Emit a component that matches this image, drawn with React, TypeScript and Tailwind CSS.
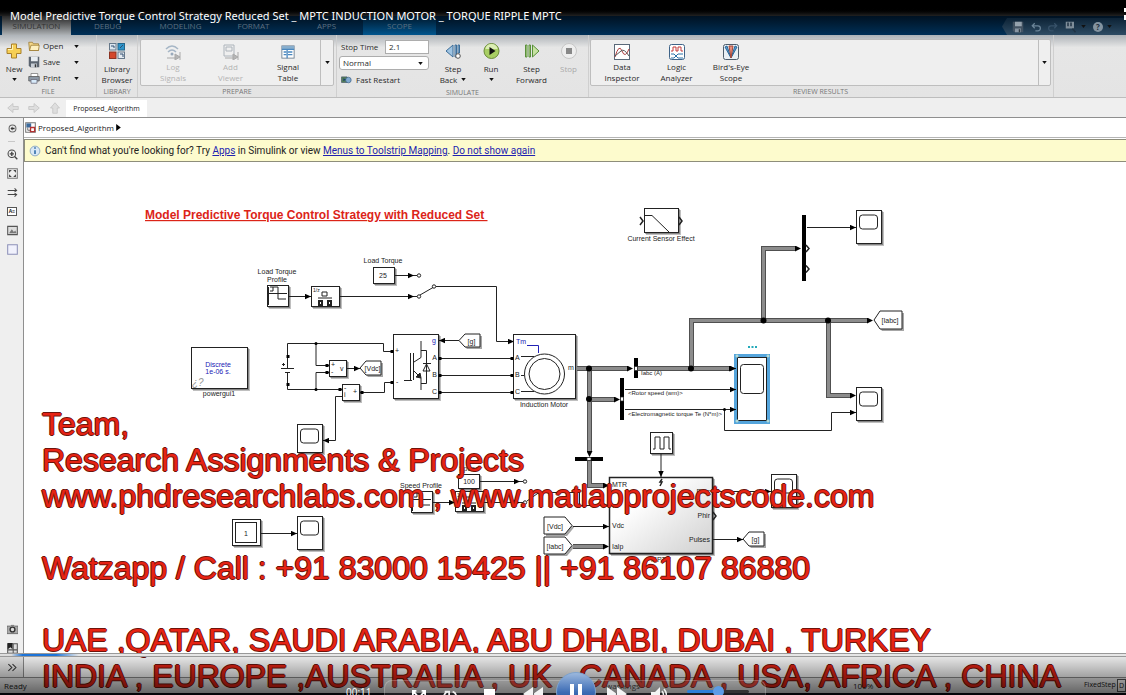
import type { ReactNode } from "react";

const Caret = ({ className = "" }: { className?: string }) => (
  <svg viewBox="0 0 6 4" className={`h-[3px] w-[5px] shrink-0 ${className}`}>
    <path d="M0 0h6L3 4z" fill="#111" />
  </svg>
);

const Icon = ({ children, className = "h-4 w-4" }: { children: ReactNode; className?: string }) => (
  <svg viewBox="0 0 16 16" fill="none" className={`shrink-0 ${className}`}>
    {children}
  </svg>
);

const FloppyIcon = () => (
  <Icon className="h-3 w-3">
    <path d="M1 1h14v14H3l-2-2z" fill="#5b6470" />
    <path d="M4 1h9v6H4z" fill="#e8edf2" />
    <path d="M4 10h8v5H4z" fill="#c8ced6" />
    <path d="M9 11h2v4H9z" fill="#333" />
  </Icon>
);

/* ---------- Toolstrip ---------- */

const ToolButton = ({
  icon,
  lines,
  caret,
  disabled,
  className = "w-10",
}: {
  icon: ReactNode;
  lines: string[];
  caret?: "inline" | "below";
  disabled?: boolean;
  className?: string;
}) => (
  <button
    disabled={disabled}
    className={`flex flex-col items-center whitespace-nowrap pt-2 leading-[11px] disabled:text-[#aaa] ${className}`}
  >
    {icon}
    <span className="mt-1">{lines[0]}</span>
    {lines[1] && (
      <span className="flex items-center gap-1">
        {lines[1]}
        {caret === "inline" && <Caret />}
      </span>
    )}
    {caret === "below" && <Caret className="mt-1" />}
  </button>
);

const GalleryButton = ({
  icon,
  lines,
  disabled,
  className = "w-[58px]",
}: {
  icon: ReactNode;
  lines: [string, string];
  disabled?: boolean;
  className?: string;
}) => (
  <button
    disabled={disabled}
    className={`flex flex-col items-center whitespace-nowrap pt-1 leading-[11px] disabled:text-[#b4b4b4] ${className}`}
  >
    {icon}
    <span className="mt-px">{lines[0]}</span>
    <span>{lines[1]}</span>
  </button>
);

const Group = ({
  label,
  children,
  className = "",
}: {
  label: string;
  children: ReactNode;
  className?: string;
}) => (
  <section className={`flex flex-col border-r border-[#cfcfcf] ${className}`}>
    <div className="flex h-[53px]">{children}</div>
    <h2 className="text-center text-[7px] leading-[10px] text-[#777]">{label}</h2>
  </section>
);

const FileButton = ({ icon, label }: { icon: ReactNode; label: string }) => (
  <button className="flex h-[16px] items-center gap-[3px]">
    {icon}
    <span className="w-[28px] text-left">{label}</span>
    <Caret />
  </button>
);

const Toolstrip = () => (
  <div className="flex h-[63px] border-b border-[#bdbdbd] bg-gradient-to-b from-[#aeb3b8] via-[#e6e6e6] via-20% to-[#e4e4e4] text-[8px] text-[#2a2a2a]">
    <Group label="FILE" className="w-[97px]">
      <ToolButton
        className="w-7"
        caret="below"
        lines={["New"]}
        icon={
          <Icon>
            <path d="M5.500 1h5v4.500h4.500v5h-4.500v4.500h-5v-4.500H1v-5h4.500z" fill="#f6cf55" stroke="#a9802b" />
            <path d="M6.500 2v4.500H2" stroke="#fff3b8" />
          </Icon>
        }
      />
      <div className="flex flex-col pt-[3px]">
        <FileButton
          label="Open"
          icon={
            <Icon className="h-3 w-3">
              <path d="M1 3h5l1 2h7v9H2z" fill="#f5d98a" stroke="#97762e" />
              <path d="M4 7h11l-1 7H2z" fill="#fdf0bf" stroke="#97762e" />
            </Icon>
          }
        />
        <FileButton label="Save" icon={<FloppyIcon />} />
        <FileButton
          label="Print"
          icon={
            <Icon className="h-3 w-3">
              <path d="M4 2h9v5H4z" fill="#fff" stroke="#777" />
              <path d="M1 6h14v6H1z" fill="#8d99a6" stroke="#555" />
              <path d="M4 10h8v5H4z" fill="#d8ebfa" stroke="#667" />
            </Icon>
          }
        />
      </div>
    </Group>

    <Group label="LIBRARY" className="w-[41px]">
      <ToolButton
        lines={["Library", "Browser"]}
        icon={
          <Icon>
            <rect x="0.500" y="0.500" width="6.500" height="6.500" fill="#dce6ef" stroke="#66788a" />
            <rect x="9" y="0.500" width="6.500" height="6.500" fill="#2d93c9" stroke="#24668c" />
            <rect x="0.500" y="9" width="6.500" height="6.500" fill="#d4472b" stroke="#8c3322" />
            <rect x="9" y="9" width="6.500" height="6.500" fill="#e5ebf1" stroke="#66788a" />
            <path d="M2 3h3v2M11 5l3-3M11 11h3v3" stroke="#304f70" />
          </Icon>
        }
      />
    </Group>

    <Group label="PREPARE" className="w-[199px] px-[2px]">
      <div className="mt-1 flex h-[47px] flex-1 rounded-[2px] border border-[#bebebe] bg-[#efefef]">
        <GalleryButton
          disabled
          className="w-[64px]"
          lines={["Log", "Signals"]}
          icon={
            <Icon>
              <path d="M1 5q6-6 12 0M3 8q4-4 8 0" stroke="#a6b6c6" strokeWidth="1.500" />
              <circle cx="7" cy="10" r="1.500" fill="#9aaabb" />
              <path d="M2 14h9M15 8v8M10 10l5 3-5 3z" stroke="#a9a9a9" fill="#b5b5b5" />
            </Icon>
          }
        />
        <GalleryButton
          disabled
          className="w-[51px]"
          lines={["Add", "Viewer"]}
          icon={
            <Icon>
              <path d="M1 1h10v11H1zM3 3h6v4H3z" stroke="#adb4bb" />
              <path d="M2 14h9M15 8v8M10 10l5 3-5 3z" stroke="#a9a9a9" fill="#b5b5b5" />
            </Icon>
          }
        />
        <GalleryButton
          className="w-[64px]"
          lines={["Signal", "Table"]}
          icon={
            <Icon className="h-4 w-[14px]">
              <rect x="1" y="1" width="14" height="14" fill="#fff" stroke="#6d7f90" />
              <path d="M1 1h14v4H1z" fill="#88aecd" />
              <path d="M3 8h3m2 0h5M3 11h3m2 0h5M7 5v10M1 5h14" stroke="#4a88c0" strokeWidth="1.500" />
            </Icon>
          }
        />
        <button aria-label="More prepare tools" className="flex flex-1 items-center justify-center border-l border-[#bebebe]">
          <Caret />
        </button>
      </div>
    </Group>

    <Group label="SIMULATE" className="w-[252px]">
      <div className="flex w-[98px] flex-col gap-[2px] pl-[2px] pt-1">
        <label className="flex h-[15px] items-center gap-[7px] pl-[2px]">
          <span className="w-[37px] whitespace-nowrap">Stop Time</span>
          <input defaultValue="2.1" className="h-[14px] w-[44px] border border-[#adadad] bg-white px-[3px]" />
        </label>
        <div className="relative flex items-center">
          <select
            aria-label="Simulation mode"
            className="h-[14px] w-[90px] appearance-none rounded-[3px] border border-[#adadad] bg-white px-[3px] leading-3"
          >
            <option>Normal</option>
          </select>
          <Caret className="pointer-events-none absolute right-3" />
        </div>
        <button className="flex h-[16px] items-center gap-1 pl-[2px]">
          <Icon className="h-[10px] w-[11px]">
            <path d="M0 3h9v9H0z" fill="#547f58" stroke="#405463" />
            <circle cx="11" cy="8" r="4.500" fill="#7fa9cf" stroke="#345a80" />
            <path d="M3 5v5l4-3z" fill="#183f69" />
          </Icon>
          Fast Restart
        </button>
      </div>
      <ToolButton
        className="w-[36px]"
        caret="inline"
        lines={["Step", "Back"]}
        icon={
          <Icon>
            <path d="M8 2v12L1 8zM10 2h1.500v12H10zM13 2h1.500v8H13z" fill="#9fc4e2" stroke="#3d6d98" />
            <circle cx="13" cy="13" r="2.300" fill="#fff" stroke="#555" />
          </Icon>
        }
      />
      <ToolButton
        className="w-[40px]"
        caret="below"
        lines={["Run"]}
        icon={
          <Icon className="h-4 w-[17px]">
            <circle cx="8" cy="8" r="7.500" fill="#a8ce63" stroke="#6a8a39" />
            <path d="M2 6a6 5 0 0 1 12 0z" fill="#dceeb4" />
            <path d="M6 4v8l6-4z" fill="#111" />
          </Icon>
        }
      />
      <ToolButton
        className="w-[41px]"
        lines={["Step", "Forward"]}
        icon={
          <Icon>
            <path d="M1.500 2H3v12H1.500zM5 2h1.500v12H5zM8.500 2v12L15 8z" fill="#c6e3a1" stroke="#598f3b" />
          </Icon>
        }
      />
      <ToolButton
        disabled
        className="w-[33px]"
        lines={["Stop"]}
        icon={
          <Icon>
            <circle cx="8" cy="8" r="7.500" fill="#eee" stroke="#c6c6c6" />
            <path d="M5 5h6v6H5z" fill="#888" />
          </Icon>
        }
      />
    </Group>

    <Group label="REVIEW RESULTS" className="min-w-[300px] flex-[0_1_465px] pl-px pr-[2px]">
      <div className="mt-1 flex h-[47px] flex-1 rounded-[2px] border border-[#bebebe] bg-[#efefef]">
        <GalleryButton
          className="w-[62px]"
          lines={["Data", "Inspector"]}
          icon={
            <Icon>
              <rect x="0.500" y="0.500" width="15" height="15" fill="#fff" stroke="#596878" />
              <path d="M1 13Q5-1 8 7t7-2" stroke="#b03d3d" />
              <path d="M1 12l6-5q3-3 8 5" stroke="#555" />
            </Icon>
          }
        />
        <GalleryButton
          className="w-[47px]"
          lines={["Logic", "Analyzer"]}
          icon={
            <Icon>
              <rect x="0.500" y="0.500" width="15" height="15" rx="2" fill="#fff" stroke="#3e6388" />
              <path d="M2 7h2V3h3v4h2V3h3v4h2" stroke="#c23a3a" />
              <path d="M2 10h3l4 4h5M2 14h3l4-4h5" stroke="#2b73a8" />
            </Icon>
          }
        />
        <GalleryButton
          className="w-[62px]"
          lines={["Bird's-Eye", "Scope"]}
          icon={
            <Icon>
              <rect x="0.500" y="0.500" width="15" height="15" rx="2" fill="#e9eff4" stroke="#4d5c6b" />
              <path d="M2 3l6 11L4 2z" fill="#5c9bcd" stroke="#2c689a" />
              <path d="M14 3L8 14l4-12z" fill="#5c9bcd" stroke="#2c689a" />
              <path d="M6 2h4L8 14z" fill="#e58e7e" stroke="#a84636" />
            </Icon>
          }
        />
        <button aria-label="More review tools" className="ml-auto flex w-3 items-center justify-center border-l border-[#bebebe]">
          <Caret />
        </button>
      </div>
    </Group>
  </div>
);

const TabBar = () => (
  <div className="flex h-[19px] bg-gradient-to-b from-[#001222] to-[#003058] pl-[2px] text-[8px] leading-[19px] text-[#5d7080]">
    <a href="#simulation" className="w-[69px] bg-gradient-to-b from-[#282828] to-[#aeb2b5] text-center text-[#333]">
      SIMULATION
    </a>
    <a href="#debug" className="w-[73px] text-center">DEBUG</a>
    <a href="#modeling" className="w-[73px] text-center">MODELING</a>
    <a href="#format" className="w-[73px] text-center">FORMAT</a>
    <a href="#apps" className="w-[73px] text-center">APPS</a>
    <a href="#scope" className="w-[73px] bg-gradient-to-b from-[#00182c] to-[#00558e] text-center">SCOPE</a>
    <div className="ml-auto flex h-[17px] w-[124px] items-center gap-[7px] self-end bg-gradient-to-b from-[#0d2336] to-[#2e4c64] pl-[10px] [clip-path:polygon(5px_0,100%_0,100%_100%,5px_100%,0_50%)]">
      <button aria-label="Save" className="opacity-60">
        <FloppyIcon />
      </button>
      <button aria-label="Undo">
        <Icon className="h-[10px] w-[10px]">
          <path d="M6 2L2 6l4 4M2 6h9q4 0 4 4t-4 4H7" stroke="#6b8498" strokeWidth="2" />
        </Icon>
      </button>
      <button aria-label="Redo">
        <Icon className="h-[10px] w-[10px]">
          <path d="M10 2l4 4-4 4M14 6H5q-4 0-4 4t4 4h4" stroke="#375269" strokeWidth="2" />
        </Icon>
      </button>
      <button aria-label="Find" className="flex items-center gap-1">
        <Icon className="h-3 w-3">
          <path d="M1 1h11v9H1z" fill="#7e8d99" />
          <path d="M4 2v5m4-5v5M10 10l4 5" stroke="#203344" strokeWidth="2" />
        </Icon>
        <Caret />
      </button>
      <button aria-label="Help" className="flex items-center gap-1">
        <span className="flex h-[10px] w-[10px] items-center justify-center rounded-full bg-[#8393a0] text-[8px] font-bold leading-none text-[#1d2e3e]">
          ?
        </span>
        <Caret />
      </button>
    </div>
  </div>
);

/* ---------- Side palette ---------- */

const PaletteButton = ({ label, children }: { label: string; children: ReactNode }) => (
  <button aria-label={label} className="flex h-[19px] w-6 items-center justify-center">
    <Icon className="h-[11px] w-[11px]">{children}</Icon>
  </button>
);

const Palette = () => (
  <nav className="flex w-6 shrink-0 flex-col border-r border-[#8f8f8f] bg-[#efefef] pt-[1px]">
    <PaletteButton label="Hide browser">
      <circle cx="8" cy="8" r="5" stroke="#666" strokeWidth="1.500" />
      <path d="M5 8l3-3v6zM8 7h3v2H8z" fill="#333" />
    </PaletteButton>
    <hr className="mx-2 my-[3px] border-[#c8c8c8]" />
    <PaletteButton label="Zoom">
      <circle cx="7" cy="7" r="5.500" stroke="#444" strokeWidth="1.500" />
      <path d="M4 7h6M7 4v6M11 11l4 4" stroke="#444" strokeWidth="2" />
    </PaletteButton>
    <PaletteButton label="Fit to view">
      <path d="M1 1h14v14H1z" stroke="#777" strokeWidth="1.500" />
      <path d="M3 3h4L3 7zM13 3v4L9 3zM13 13H9l4-4zM3 13V9l4 4z" fill="#444" />
    </PaletteButton>
    <PaletteButton label="Sample time">
      <path d="M1 5h13M1 11h13M11 2l3 3-3 2M11 9l3 2-3 3" stroke="#444" strokeWidth="1.500" />
    </PaletteButton>
    <button aria-label="Annotation" className="flex h-[19px] w-6 items-center justify-center">
      <span className="border border-[#555] bg-white px-[1px] text-[5px] font-bold leading-[7px]">A≡</span>
    </button>
    <PaletteButton label="Image">
      <path d="M1 2h14v12H1z" fill="#ddd" stroke="#555" strokeWidth="1.500" />
      <path d="M3 12l4-6 3 4 2-2 2 4z" fill="#777" />
    </PaletteButton>
    <PaletteButton label="Area">
      <path d="M1 1h14v14H1z" fill="#f0f1fc" stroke="#8c90b8" strokeWidth="1.500" />
    </PaletteButton>
    <div className="mt-auto flex flex-col">
      <PaletteButton label="Screenshot">
        <path d="M0 3h5l1-1h4l1 1h5v11H0z" fill="#aaa" stroke="#555" />
        <circle cx="8" cy="8" r="3.500" fill="#ddd" stroke="#333" strokeWidth="2" />
      </PaletteButton>
      <PaletteButton label="Viewmarks">
        <path d="M1 1h14v14H1zM1 10h14M9 1v14" fill="#ddd" stroke="#555" strokeWidth="1.500" />
        <path d="M1 0h7v9L5 6 1 9z" fill="#222" />
      </PaletteButton>
      <PaletteButton label="Expand palette">
        <path d="M2 3l5 5-5 5M8 3l5 5-5 5" stroke="#333" strokeWidth="1.500" />
      </PaletteButton>
    </div>
  </nav>
);

/* ---------- Block diagram ---------- */

type BoxProps = { x: number; y: number; w: number; h: number; fill?: string };

const Block = ({ x, y, w, h, fill = "#fff" }: BoxProps) => (
  <g>
    <rect x={x + 2} y={y + 2} width={w + 1} height={h + 1} fill="#000" opacity="0.25" stroke="none" />
    <rect x={x + 1} y={y + 1} width={w + 1} height={h + 1} fill="#000" opacity="0.3" stroke="none" />
    <rect x={x + 0.5} y={y + 0.5} width={w} height={h} fill={fill} />
  </g>
);

const Scope = ({ x, y, h = 33 }: { x: number; y: number; h?: number }) => (
  <g>
    <Block x={x} y={y} w={25} h={h} />
    <rect x={x + 3.5} y={y + 5} width={18} height={14} rx="3" />
  </g>
);

const Wire = ({ d }: { d: string }) => <path d={d} markerEnd="url(#arrow)" />;

// The arrow head starts where the bus line ends
const Bus = ({ d, arrow = true }: { d: string; arrow?: boolean }) => (
  <g>
    <path d={d} stroke="#505050" strokeWidth="5" />
    <path d={d} stroke="#8c8c8c" strokeWidth="3" />
    <path d={d} stroke="none" markerEnd={arrow ? "url(#bus-arrow)" : undefined} />
  </g>
);

const Label = ({
  x,
  y,
  children,
  anchor = "start",
  fill = "#222",
  className,
}: {
  x: number;
  y: number;
  children: ReactNode;
  anchor?: "start" | "middle" | "end";
  fill?: string;
  className?: string;
}) => (
  <text x={x} y={y} textAnchor={anchor} fill={fill} stroke="none" className={className}>
    {children}
  </text>
);

// Goto / From tags: the pointed side faces the signal
const Tag = ({ x, y, w, h, text, dir = "left" }: { x: number; y: number; w: number; h: number; text: string; dir?: "left" | "right" }) => {
  const d =
    dir === "left"
      ? `M${x} ${y + h / 2}L${x + 6} ${y}H${x + w}V${y + h}H${x + 6}Z`
      : `M${x} ${y}H${x + w - 7}L${x + w} ${y + h / 2}L${x + w - 7} ${y + h}H${x}Z`;
  return (
    <g>
      <path d={d} fill="#000" stroke="none" opacity="0.35" transform="translate(2 2)" />
      <path d={d} fill="#fff" />
      <Label x={dir === "left" ? x + w / 2 + 2 : x + w / 2 - 3} y={y + h / 2 + 3} anchor="middle">
        {text}
      </Label>
    </g>
  );
};

const RepeatingTable = ({ x, y }: { x: number; y: number }) => (
  <g>
    <Block x={x} y={y} w={21} h={21} />
    <path d={`M${x + 1.5} ${y + 2}v18M${x + 1} ${y + 8.5}h19M${x + 3} ${y + 2}h8v12h8M${x + 3} ${y + 6}h3V${y + 2}`} />
  </g>
);

const RateLimiter = ({ x, y }: { x: number; y: number }) => (
  <g>
    <Block x={x} y={y} w={28} h={20} />
    <text x={x + 2} y={y + 6} fill="#222" stroke="none" className="text-[5px]">1/z</text>
    <path d={`M${x + 11} ${y + 6}h5v4h-5zM${x + 7} ${y + 12}h14`} />
    <path d={`M${x + 8} ${y + 15}h3v4h-3zM${x + 17} ${y + 15}h3v4h-3z`} strokeWidth="2" />
  </g>
);

const junctions = [
  [589, 368.5, 3], [589, 399, 3], [691, 368.5, 3], [763.5, 320.5, 3], [828, 320.5, 3],
  [316, 343.5, 1.5], [316, 389.5, 1.5], [724.5, 409.5, 1.5],
];

const terminals = [
  [392, 351], [392, 382], [440, 358], [440, 375], [440, 392], [512, 358], [512, 375], [512, 392],
  [327, 365], [327, 372], [340, 389], [362, 392], [288, 356], [288, 384],
];

const Diagram = () => (
  <svg
    width="1102"
    height="514"
    viewBox="24 162 1102 514"
    fill="none"
    stroke="#222"
    className="block max-w-none font-['Liberation_Sans',sans-serif] text-[7px]"
  >
    <defs>
      <marker id="arrow" markerUnits="userSpaceOnUse" markerWidth="7" markerHeight="6" refX="6" refY="3" orient="auto">
        <path d="M0 0.300L6 3L0 5.700z" fill="#000" stroke="none" />
      </marker>
      <marker id="bus-arrow" markerUnits="userSpaceOnUse" markerWidth="7" markerHeight="6" refX="1" refY="3" orient="auto">
        <path d="M0 0L6 3L0 6z" fill="#000" stroke="none" />
      </marker>
      <linearGradient id="subsystem" x1="0" y1="0" x2="1" y2="1">
        <stop offset="0.3" stopColor="#fff" />
        <stop offset="1" stopColor="#cfcfcf" />
      </linearGradient>
    </defs>

    <text x="145" y="219" fill="#dc2418" stroke="none" className="whitespace-pre text-[12px] font-bold underline">
      {"Model Predictive Torque Control Strategy with Reduced Set "}
    </text>

    {/* Load torque reference */}
    <Label x={277} y={274} anchor="middle">Load Torque</Label>
    <Label x={277} y={282} anchor="middle">Profile</Label>
    <RepeatingTable x={267} y={285} />
    <Wire d="M288 296.500H311" />
    <RateLimiter x={311} y={286} />
    <Wire d="M340 296.500H414" />
    <Label x={383} y={263} anchor="middle">Load Torque</Label>
    <Block x={373} y={267} w={21} h={16} />
    <Label x={383} y={278} anchor="middle">25</Label>
    <Wire d="M394 275.500H414" />
    <path d="M414 275.500h3M414 296.500h3M420 295L433 287.500M436 286.500h3" />
    <circle cx="419" cy="275.500" r="1.700" />
    <circle cx="419" cy="296.500" r="1.700" />
    <circle cx="434" cy="286.500" r="1.700" />
    <Wire d="M438 286.500H496.500V341.500H514" />

    <Block x={191} y={347} w={56} h={41} />
    <Label x={218} y={367} anchor="middle" fill="#2222b5">Discrete</Label>
    <Label x={218} y={374} anchor="middle" fill="#2222b5">1e-06 s.</Label>
    <text x="192" y="386" fill="#999" stroke="none" className="text-[10px] italic">¿?</text>
    <Label x={219} y={396} anchor="middle">powergui1</Label>

    {/* DC source and measurements */}
    <path d="M287.500 368V343.500H383.500V351.500H393M287.500 372V389.500H342M316 343.500V365.500H329M316 389.500V372.500H329" />
    <path d="M281 368.500H294M285 372.500H290M282 364.500h3M283.500 363v3" />
    <Block x={329} y={360} w={17} h={16} />
    <Label x={331} y={367}>+</Label>
    <Label x={331} y={374}>-</Label>
    <Label x={340} y={371}>v</Label>
    <Wire d="M347 368.500H360" />
    <Tag x={360} y={361} w={21} h={14} text="[Vdc]" />
    <Block x={342} y={384} w={17} h={16} />
    <Label x={344} y={390}>-</Label>
    <Label x={344} y={397}>i</Label>
    <Label x={353} y={394}>+</Label>
    <path d="M360 392.500H384.500V382.500H393" />
    <Wire d="M342 396.500H335.500V440.500H323" />
    <Scope x={297} y={424} h={28} />

    {/* Inverter */}
    <Block x={393} y={334} w={45} h={64} />
    <Label x={395} y={353}>+</Label>
    <Label x={396} y={384}>-</Label>
    <path d="M410.500 353V380M413.500 353V380M404 380.500H412M414 362L421 357.500V341M414 371L421 378V390M421 350.500H426.500V383.500H421M423 371H430L426.500 364zM423 363.500H431" />
    <path d="M416 377l5 1-1-5z" fill="#222" />
    <Label x={436} y={343} anchor="end" fill="#2222b5">g</Label>
    <Label x={437} y={360} anchor="end">A</Label>
    <Label x={437} y={377} anchor="end">B</Label>
    <Label x={437} y={394} anchor="end">C</Label>
    <Tag x={459} y={334} w={21} h={13} text="[g]" />
    <Wire d="M459 340.500H439" />
    <path d="M438 358.500H514M438 375.500H514M438 392.500H514" />

    {/* Induction motor */}
    <Block x={513} y={334} w={62} h={64} />
    <Label x={516} y={344} fill="#2222b5">Tm</Label>
    <path d="M527 345.500H538.500V353" stroke="#2222b5" />
    <circle cx="544.500" cy="374" r="20" />
    <circle cx="544.500" cy="374" r="15.500" />
    <Label x={515} y={360}>A</Label>
    <Label x={515} y={377}>B</Label>
    <Label x={515} y={394}>C</Label>
    <path d="M521 356.500H534M521 375.500H524M521 391.500H534" />
    <Label x={568} y={370}>m</Label>
    <Label x={544} y={407} anchor="middle">Induction Motor</Label>

    {/* Measurement buses */}
    <Bus d="M577 368.500H628" />
    <Bus d="M638 368.500H730" />
    <Bus d="M589.500 368V452" />
    <Bus d="M589 399.500H615" />
    <Bus d="M589.500 461V485.500H604" />
    <Bus d="M691.500 368V320.500H868" />
    <Bus d="M763.500 320V248.500H796" />
    <Bus d="M828.500 320V395.500H851" />
    <g fill="#000" stroke="none">
      <rect x="634" y="358" width="4" height="20" />
      <rect x="620" y="378" width="4" height="42" />
      <rect x="575" y="457" width="28" height="4" />
      <rect x="802" y="215" width="4" height="66" />
    </g>
    <g fill="#fff" strokeWidth="0.700">
      <rect x="634.500" y="366.500" width="3" height="4" />
      <rect x="620.500" y="397" width="3" height="4" />
      <rect x="587" y="457.500" width="4" height="3" />
    </g>
    <Label x={641} y={375} className="text-[6px]">Iabc (A)</Label>
    <Label x={628} y={395} className="text-[6px]">{"<Rotor speed (wm)>"}</Label>
    <Label x={628} y={416} className="text-[6px]">{"<Electromagnetic torque Te (N*m)>"}</Label>
    <path d="M625 389.500H730M625 409.500H730" />
    <Wire d="M724.500 409.500V430.500H831.500V412.500H856" />
    <path d="M806 245l3 3.500-3 3.500M806 265.500l3 3.500-3 3.500" strokeWidth="1.500" />
    <Wire d="M807 227.500H856" />
    <Scope x={856} y={210} />
    <Scope x={856} y={387} />
    <Tag x={874} y={311} w={28} h={18} text="[Iabc]" />

    {/* Selected scope */}
    <rect x="735.500" y="355.500" width="33" height="67" fill="#fff" stroke="#55a5dc" strokeWidth="3" />
    <rect x="737.500" y="357.500" width="29" height="63" />
    <rect x="740.500" y="364.500" width="23" height="29" rx="3" />
    <path d="M736 355h2v2h-2zM767 355h2v2h-2zM736 420h2v2h-2zM767 420h2v2h-2z" fill="#fff" stroke="#9cc" />
    <path d="M748 347h2M751.500 347h2M755 347h2" stroke="#24aaba" strokeWidth="2" />
    <Wire d="M730 368.500H736" />
    <Wire d="M729 389.500H736" />
    <Wire d="M729 409.500H736" />

    <Block x={644} y={208} w={34} h={24} />
    <path d="M645 215.500h7L669 232" />
    <path d="M640 217l3 4-3 4M679 217l3 4-3 4" strokeWidth="1.500" />
    <Label x={661} y={241} anchor="middle">Current Sensor Effect</Label>

    {/* Speed reference */}
    <Label x={421} y={488} anchor="middle">Speed Profile</Label>
    <Label x={469} y={471} anchor="middle">Speed</Label>
    <RepeatingTable x={411} y={491} />
    <Wire d="M433 502.500H455" />
    <RateLimiter x={455} y={491} />
    <Block x={458} y={474} w={21} h={14} />
    <Label x={469} y={484} anchor="middle">100</Label>
    <Wire d="M480 481.500H520" />
    <Wire d="M484 502.500H520" />
    <path d="M520 481.500h3M520 502.500h3M527 501L539 492.500" />
    <Wire d="M539 492.500H579.500V505.500H609" />
    <circle cx="525" cy="481.500" r="1.700" />
    <circle cx="525" cy="502.500" r="1.700" />

    <Block x={232} y={519} w={28} h={26} />
    <rect x="235.500" y="522.500" width="21" height="20" />
    <Label x={246} y={536} anchor="middle">1</Label>
    <Wire d="M261 533.500H297" />
    <Scope x={297} y={516} />

    {/* Controller subsystem */}
    <Block x={650} y={432} w={22} h={21} />
    <path d="M653 449h2V437h5v12h4V437h5v12h2" />
    <Wire d="M661 454V477" />
    <g strokeWidth="1.500">
      <Block x={609} y={477} w={103} h={76} fill="url(#subsystem)" />
    </g>
    <path d="M662 479l-2 3h2l-2 4" strokeWidth="1.500" />
    <Label x={612} y={487}>MTR</Label>
    <Label x={612} y={508}>wr</Label>
    <Label x={612} y={528}>Vdc</Label>
    <Label x={612} y={549}>Ialp</Label>
    <Label x={710} y={494} anchor="end">Phis</Label>
    <Label x={710} y={518} anchor="end">Phir</Label>
    <Label x={710} y={542} anchor="end">Pulses</Label>
    <Label x={661} y={562} anchor="middle">MPTC</Label>
    <path d="M713 512l3 4-3 4" strokeWidth="1.500" />
    <Wire d="M713 491.500H771" />
    <Wire d="M713 539.500H743" />
    <Scope x={771} y={474} />
    <Tag x={743} y={532} w={21} h={14} text="[g]" />
    <Tag x={544} y={517} w={28} h={17} text="[Vdc]" dir="right" />
    <Tag x={544} y={537} w={28} h={17} text="[Iabc]" dir="right" />
    <Wire d="M573 526.500H609" />
    <Bus d="M573 546.500H604" />

    <g fill="#000" stroke="none">
      {junctions.map(([cx, cy, r]) => (
        <circle key={`${cx}-${cy}`} cx={cx} cy={cy} r={r} />
      ))}
      {terminals.map(([x, y]) => (
        <rect key={`${x}-${y}`} x={x - 1.5} y={y - 1} width="3" height="3" />
      ))}
    </g>
  </svg>
);

/* ---------- Player overlay ---------- */

const Player = () => (
  <div className="absolute inset-x-0 bottom-0 h-[42px] overflow-hidden bg-gradient-to-b from-black/5 to-black/60">
    <input
      type="range"
      aria-label="Seek"
      defaultValue={6}
      className="block h-1 w-full appearance-none border-y border-[#999] bg-[linear-gradient(to_right,transparent_1%,#1d74d8_2%,#1d74d8_5%,#e6e6e6_7%)] [&::-webkit-slider-thumb]:appearance-none"
    />
    <div className="flex justify-center pr-[14px] pt-[15px]">
      <div className="flex h-[42px] items-start">
        <span className="mr-3 w-[26px] pt-[14px] font-['Open_Sans',sans-serif] text-[10px] leading-3 text-white">00:11</span>
        <div className="mt-2 flex h-[34px] w-[382px] items-start rounded-lg border border-white/20 bg-white/10 pt-2">
          <button aria-label="Shuffle" className="ml-[27px]">
            <Icon className="h-[14px] w-[14px]">
              <path d="M2 3l5 6v7M14 3L9 9v7M1 7V2h4M11 2h4v5" stroke="#fff" strokeWidth="2" />
            </Icon>
          </button>
          <button aria-label="Repeat" className="ml-[17px]">
            <Icon className="h-[14px] w-[14px]">
              <path d="M4 14A6 6 0 0 1 6 3M11 3a6 6 0 0 1 1 11M2 3h5v4M14 13H9v-4" stroke="#eee" strokeWidth="2" />
            </Icon>
          </button>
          <button aria-label="Stop" className="ml-[27px] h-3 w-[11px] bg-white" />
        </div>
      </div>
    </div>
    <div className="absolute left-1/2 top-[19px] flex -translate-x-[40px] items-start">
      <button aria-label="Rewind" className="mr-[13px] mt-[15px]">
        <svg viewBox="0 0 20 14" className="h-[14px] w-5">
          <path d="M10 0v14L0 7zM20 0v14L10 7z" fill="#f4f4f4" />
        </svg>
      </button>
      <button
        aria-label="Pause"
        className="flex h-10 w-10 items-center justify-center gap-1 rounded-full border border-[#7da3cf] bg-gradient-to-b from-[#9cb8dd] via-[#3e6db5] to-[#123b83]"
      >
        <span className="h-4 w-1 bg-white" />
        <span className="h-4 w-1 bg-white" />
      </button>
      <button aria-label="Fast forward" className="ml-[11px] mt-[15px]">
        <svg viewBox="0 0 20 14" className="h-[14px] w-5">
          <path d="M0 0v14l10-7zM10 0v14l10-7z" fill="#f4f4f4" />
        </svg>
      </button>
      <button aria-label="Mute" className="ml-6 mt-[15px]">
        <Icon>
          <path d="M0 5h4l5-5v16l-5-5H0z" fill="#f4f4f4" />
          <path d="M11 4q3 4 0 8M13 2q5 6 0 12" stroke="#eee" strokeWidth="1.500" />
        </Icon>
      </button>
      <input
        type="range"
        aria-label="Volume"
        className="ml-5 mt-[18px] h-[3px] w-[62px] appearance-none rounded bg-[linear-gradient(to_right,#2e7fd8_50%,#333_50%)] [&::-webkit-slider-thumb]:h-[11px] [&::-webkit-slider-thumb]:w-[11px] [&::-webkit-slider-thumb]:appearance-none [&::-webkit-slider-thumb]:rounded-full [&::-webkit-slider-thumb]:bg-[#5c9ce6]"
      />
    </div>
  </div>
);

const NavArrow = ({ label, d }: { label: string; d: string }) => (
  <button aria-label={label} className="flex w-[21px] items-center justify-center">
    <Icon className="h-3 w-3">
      <path d={d} fill="#dedede" stroke="#c2c2c2" />
    </Icon>
  </button>
);

const App = () => {
  return (
    <div className="relative flex h-screen flex-col overflow-hidden bg-white font-['Open_Sans',sans-serif] text-[#222]">
      <header>
        <div className="h-4 bg-gradient-to-b from-black via-black to-[#222]" />
        <TabBar />
        <Toolstrip />
      </header>
      <h1 className="absolute left-[10px] top-2 whitespace-nowrap font-['Noto_Sans',sans-serif] text-[11px] leading-4 text-white">
        Model Predictive Torque Control Strategy Reduced Set _ MPTC INDUCTION MOTOR _ TORQUE RIPPLE MPTC
      </h1>
      <div className="absolute right-0 top-2 flex flex-col gap-[3px]">
        <span className="h-1 w-[2px] bg-white" />
        <span className="h-[5px] w-[2px] bg-white" />
      </div>

      <div className="flex h-[19px] shrink-0 bg-[#efefef] pl-[2px]">
        <NavArrow label="Back" d="M1 8l7-6v4h7v4H8v4z" />
        <NavArrow label="Forward" d="M15 8L8 2v4H1v4h7v4z" />
        <NavArrow label="Up" d="M8 1L2 8h3v7h6V8h3z" />
        <a href="#model" className="ml-[1px] mt-[2px] w-[81px] bg-white text-center text-[7px] leading-[17px]">
          Proposed_Algorithm
        </a>
      </div>

      <div className="flex min-h-0 flex-1 border-t border-[#8f8f8f]">
        <Palette />
        <main className="flex min-w-0 flex-1 flex-col">
          <div className="flex h-5 shrink-0 items-center gap-[2px] border-b border-[#b5b5b5] px-[1px] text-[8px]">
            <Icon className="h-[11px] w-[11px]">
              <path d="M1 1h14v14H1z" fill="#fff" stroke="#777" strokeWidth="1.500" />
              <path d="M2 2h7v6H2z" fill="#3c6b9c" />
              <path d="M8 8h6v6H8z" fill="#fff" stroke="#b63232" strokeWidth="2" />
              <path d="M4 8v4h4" stroke="#333" />
            </Icon>
            <a href="#model">Proposed_Algorithm</a>
            <svg viewBox="0 0 4 6" className="h-[7px] w-[5px]">
              <path d="M0 0l4 3-4 3z" fill="#000" />
            </svg>
          </div>
          <div className="mt-px flex h-[23px] shrink-0 items-center gap-1 border border-r-0 border-[#8e8e7b] bg-[#fdfbcd] pl-1 font-['Roboto',sans-serif] text-[10px]">
            <Icon className="h-3 w-3">
              <circle cx="8" cy="8" r="6.500" fill="#d9e8f5" stroke="#7597b8" />
              <path d="M8 7v5M8 3v2" stroke="#2464a4" strokeWidth="2" />
            </Icon>
            <p>
              Can't find what you're looking for? Try{" "}
              <a href="#apps" className="text-[#2222b0] underline">Apps</a> in Simulink or view{" "}
              <a href="#mapping" className="text-[#2222b0] underline">Menus to Toolstrip Mapping</a>.{" "}
              <a href="#dismiss" className="text-[#2222b0] underline">Do not show again</a>
            </p>
          </div>
          <div className="min-h-0 flex-1 overflow-hidden">
            <Diagram />
          </div>
        </main>
      </div>

      <footer className="flex h-[18px] shrink-0 items-center border-b-2 border-t border-b-[#0c0c16] border-t-[#8f8f8f] bg-[#efefef] pl-1 text-[8px]">
        <span className="flex-1">Ready</span>
        <span className="w-[247px]">warnings</span>
        <span className="w-[231px]">100%</span>
        <span className="flex w-[42px] items-center text-[7px]">
          FixedStep
          <span className="ml-auto border border-[#555] bg-white px-px leading-[11px]">D</span>
        </span>
      </footer>

      {/* Contact details laid over the whole window */}
      <div className="absolute left-[42px] top-[406px] whitespace-pre font-['Liberation_Sans',sans-serif] text-[32px] leading-9 text-[#e62314] [text-shadow:1px_0_#6e140c,-1px_0_#6e140c,0_1px_#6e140c,0_-1px_#6e140c]">
        <p>Team,</p>
        <p>Research Assignments &amp; Projects</p>
        <p>www.phdresearchlabs.com ; www.matlabprojectscode.com</p>
        <p className="mt-9">Watzapp / Call : +91 83000 15425 || +91 86107 86880</p>
        <p className="mt-9">UAE ,QATAR, SAUDI ARABIA, ABU DHABI, DUBAI , TURKEY</p>
        <p>INDIA , EUROPE ,AUSTRALIA , UK , CANADA , USA, AFRICA , CHINA</p>
      </div>
      <Player />
    </div>
  );
};

export default App;
